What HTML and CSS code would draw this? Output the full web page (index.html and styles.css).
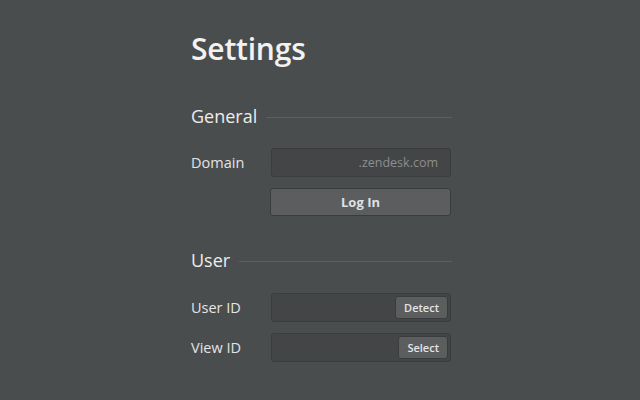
FILE: index.html
```html
<!DOCTYPE html>
<html>
<head>
<meta charset="utf-8">
<link rel="stylesheet" href="styles.css">
</head>
<body>
<div class="page">
  <h1 class="title">Settings</h1>
  <div class="section-head"><span>General</span><div class="rule"></div></div>
  <div class="row">
    <div class="label">Domain</div>
    <div class="field"><span class="placeholder">.zendesk.com</span></div>
  </div>
  <div class="row">
    <div class="label"></div>
    <div class="button">Log In</div>
  </div>
  <div class="section-head user"><span>User</span><div class="rule"></div></div>
  <div class="row">
    <div class="label">User ID</div>
    <div class="field"><span class="mini">Detect</span></div>
  </div>
  <div class="row">
    <div class="label">View ID</div>
    <div class="field"><span class="mini">Select</span></div>
  </div>
</div>
</body>
</html>
```
FILE: styles.css
```css
html, body {
  margin: 0;
  padding: 0;
  background: #4a4d4e;
  height: 100%;
}
body {
  font-family: "Open Sans", "Noto Sans", sans-serif;
  color: #e6e6e6;
}
.page {
  margin-left: 191px;
  width: 261px;
  padding-top: 27px;
}
.title {
  margin: 0;
  font-size: 30px;
  font-weight: 600;
  line-height: 44px;
  color: #f2f2f2;
  letter-spacing: -0.2px;
}
.section-head {
  display: flex;
  align-items: center;
  gap: 9px;
  margin-top: 33px;
  font-size: 18px;
  line-height: 24px;
  color: #ececec;
}
.section-head.user {
  margin-top: 32px;
}
.rule {
  flex: 1;
  height: 1px;
  background: #5d6061;
  margin-top: 2px;
}
.row {
  display: flex;
  align-items: center;
  margin-top: 11px;
}
.section-head + .row {
  margin-top: 20px;
}
.section-head.user + .row {
  margin-top: 21px;
}
.label {
  width: 80px;
  font-size: 14.5px;
  color: #e4e4e4;
}
.field {
  box-sizing: border-box;
  width: 180px;
  height: 29px;
  border: 1px solid #3a3c3d;
  border-radius: 3px;
  background: #434546;
  display: flex;
  align-items: center;
  justify-content: flex-end;
  padding: 0 2px;
}
.placeholder {
  font-size: 12.5px;
  color: #8d8f90;
  padding-right: 10px;
}
.button {
  box-sizing: border-box;
  width: 181px;
  height: 28px;
  margin-left: -1px;
  border: 1px solid #393b3c;
  border-radius: 3px;
  background: #5b5d5e;
  display: flex;
  align-items: center;
  justify-content: center;
  font-size: 13px;
  font-weight: 700;
  color: #dde0e4;
}
.mini {
  box-sizing: border-box;
  height: 23px;
  padding: 0 8px;
  border: 1px solid #393b3c;
  border-radius: 3px;
  background: #5b5d5e;
  display: flex;
  align-items: center;
  font-size: 11px;
  font-weight: 600;
  color: #e2e4e8;
}
```
